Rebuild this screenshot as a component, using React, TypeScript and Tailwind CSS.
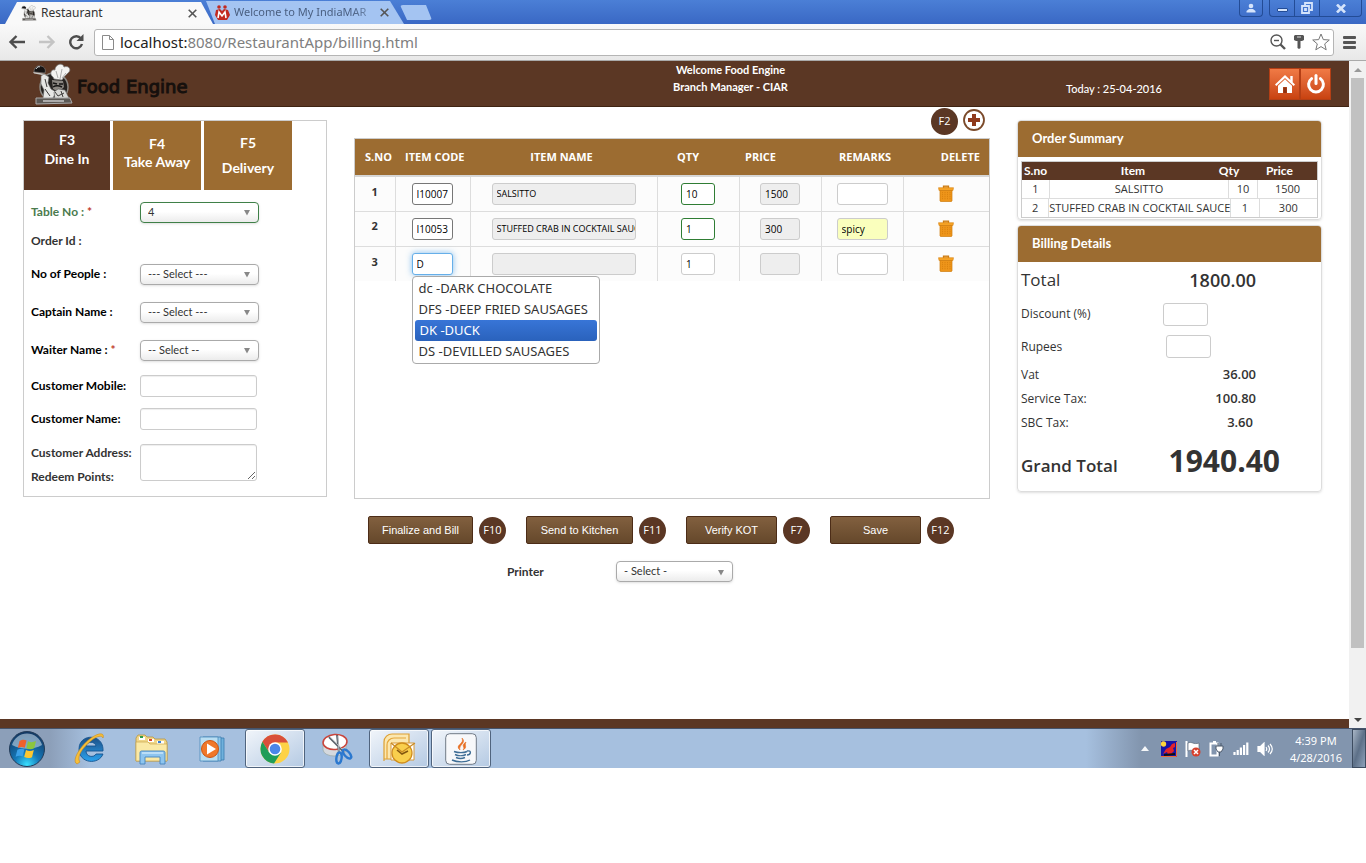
import React from 'react';

const orderRows = [
  { sno: 1, code: 'I10007', name: 'SALSITTO', qty: '10', price: '1500', remarks: '', saved: true },
  { sno: 2, code: 'I10053', name: 'STUFFED CRAB IN COCKTAIL SAUCE', qty: '1', price: '300', remarks: 'spicy', saved: true },
  { sno: 3, code: 'D', name: '', qty: '1', price: '', remarks: '', saved: false },
];

const suggestions = ['dc -DARK CHOCOLATE', 'DFS -DEEP FRIED SAUSAGES', 'DK -DUCK', 'DS -DEVILLED SAUSAGES'];

const ChefIcon = ({ className }: { className: string }) => (
  <svg viewBox="0 0 40 42" className={className} aria-hidden="true">
    <circle cx="21" cy="24" r="14" fill="#24211f" stroke="#8d8984" strokeWidth="1.500" />
    <path d="M20 14c-4-3-2-8 2-7 0-6 8-8 9-3 5-2 8 3 4 6l-4 4-2 3-8-1z" fill="#f3f3f1" stroke="#777" strokeWidth=".7" />
    <path d="M23 8l2 7M29 6l-2 10M33 10l-4 5" stroke="#999" strokeWidth=".8" fill="none" />
    <path d="M19 17l11 1 1 6-5 5-6-3z" fill="#8b8782" />
    <path d="M20 20l4 1m2 0l4 0M20 24c3-2 5-2 9 0" stroke="#161514" strokeWidth="1.500" fill="none" />
    <path d="M1 9c0-4 3-7 7-6 4 1 5 4 4 7z" fill="#151313" stroke="#888" strokeWidth=".6" />
    <path d="M3 6c1-2 3-3 4-2" stroke="#ddd" fill="none" />
    <path d="M0 9l13 2-1 1.500-11-2z" fill="#c9c9c7" />
    <path d="M8 13l3-2 5 3-1 6 3 6 5 3-3 6-10 1 1-9-3-6z" fill="#e7e7e5" stroke="#666" strokeWidth=".6" />
    <path d="M21 29l4-3 7 1 4 8-14 2z" fill="#d9d9d6" stroke="#555" strokeWidth=".6" />
    <path d="M12 16l2 8M12 26l5 7M22 29l3 4 6-3M28 28l2 6" stroke="#3d3b3a" fill="none" />
    <path d="M3 35h34l2 5-36 1z" fill="#5c5955" stroke="#aaa" strokeWidth="1" />
    <path d="M10 38h21" stroke="#c9c9c9" strokeWidth="1.500" />
  </svg>
);

const TrashIcon = () => (
  <svg viewBox="0 0 16 17" className="h-[17px] w-4" aria-hidden="true">
    <path d="M5.500 3V1.200h5V3" fill="#f7b455" stroke="#c97a12" strokeWidth="1.300" />
    <path d="M.5 2.700h15L15 5.500H1z" fill="#f6a325" stroke="#d98515" strokeWidth=".6" />
    <path d="M2 5.500h12V16l-.6.500H2.600L2 16z" fill="#ee951a" stroke="#cf7b0c" strokeWidth=".7" />
    <path d="M4.500 7v8M7 7v8M9.500 7v8M12 7v8" stroke="#d9820f" strokeWidth=".9" strokeDasharray="1.200 .8" />
  </svg>
);

const HomeIcon = () => (
  <svg viewBox="0 0 20 20" className="h-5 w-5" fill="#fff" aria-hidden="true">
    <path d="M10 1L0 10.500l1.300 1.500L10 4l8.700 8 1.300-1.500-2.300-2.200V2h-2.400v4z" />
    <path d="M10 5.300L3 11.800V19h5v-6h4v6h5v-7.200z" />
    <path d="M8.300 13.300h3.400V19H8.300z" fill="#8e3212" />
  </svg>
);

const PowerIcon = () => (
  <svg viewBox="0 0 20 20" className="h-5 w-5" fill="none" stroke="#fff" strokeWidth="3" strokeLinecap="round" aria-hidden="true">
    <path d="M5.600 4.600a7.400 7.400 0 1 0 8.800 0" />
    <path d="M10 1.500v8" />
  </svg>
);

const PlusIcon = () => (
  <svg viewBox="0 0 24 24" className="h-6 w-6" aria-hidden="true">
    <circle cx="12" cy="12" r="10" fill="#fff" stroke="#7b4a2a" strokeWidth="1.800" />
    <path d="M10 6h4v4h4v4h-4v4h-4v-4H6v-4h4z" fill="#8f3a1c" />
  </svg>
);

const WindowsOrb = () => (
  <svg viewBox="0 0 38 38" className="h-[38px] w-[38px]" aria-hidden="true">
    <defs>
      <radialGradient id="orb" cx=".5" cy=".95" r=".9">
        <stop offset="0" stopColor="#39e0ff" />
        <stop offset=".4" stopColor="#1578b8" />
        <stop offset="1" stopColor="#123a66" />
      </radialGradient>
    </defs>
    <circle cx="19" cy="19" r="17.500" fill="url(#orb)" stroke="#233b58" />
    <path d="M4 15a15.500 15.500 0 0 1 30 0c-9 5-20 5-30 0z" fill="#c6d8e8" opacity=".6" />
    <path d="M11.500 11c3-1.600 5-1.500 7-.4l-1.700 7.200c-2.300-1-4.300-1-7 .3z" fill="#f0602c" />
    <path d="M20 11.200c2.600 1.400 5 1.200 8-.2l-1.800 7.200c-2.800 1.400-5 1.300-7.800 0z" fill="#8cc63f" />
    <path d="M9.400 19.700c2.800-1.300 4.800-1.200 7-.2l-1.800 7c-2-1-4.200-1-7 .3z" fill="#3aa0e8" />
    <path d="M18 20c2.600 1.300 5 1.300 7.800 0L24 27.200c-2.600 1.300-5 1.200-7.800-.2z" fill="#fdc72f" />
  </svg>
);

const IeIcon = () => (
  <svg viewBox="0 0 34 34" className="h-[34px] w-[34px]" aria-hidden="true">
    <defs>
      <linearGradient id="ie" x1="0" y1="0" x2="0" y2="1">
        <stop offset="0" stopColor="#1d4f86" />
        <stop offset="1" stopColor="#2aa2ee" />
      </linearGradient>
    </defs>
    <path d="M31 19H14c0 6 8 7 10 3h7c-4 11-24 10-24-5C7 1 32 1 31 19zM14 14h10c-1-5-9-5-10 0z" fill="url(#ie)" stroke="#14548f" strokeWidth=".9" />
    <path d="M5 32c-6-3 3-18 14-26 7-5 14-6 12 0-1-3-6-2-11 2C11 15 4 25 8 30z" fill="#f7bf3a" stroke="#c98c1c" strokeWidth=".6" />
  </svg>
);

const FolderIcon = () => (
  <svg viewBox="0 0 34 32" className="h-8 w-[34px]" aria-hidden="true">
    <path d="M2 5l2-3h7l2 2h6l2 2h10l2 3v19H2z" fill="#f0d688" stroke="#b9963f" strokeWidth=".8" />
    <path d="M5 4h6v3H5zM14 6h6v3h-6zM23 8h7v3h-7z" fill="#fff" />
    <path d="M6 3h3v2H6z" fill="#2c9c4a" />
    <path d="M15 6h3v2h-3z" fill="#d9472c" />
    <path d="M24 8h3v2h-3z" fill="#3b7fd1" />
    <path d="M2 9h12l2 2h17v17H2z" fill="#fae9a6" stroke="#c9a64d" strokeWidth=".7" />
    <path d="M6 31V20c0-2 1-2 2-2h21c2 0 2 1 2 2v11h-5v-7H11v7z" fill="#8ec5ef" stroke="#4583bd" strokeWidth=".9" />
    <path d="M8 20h21" stroke="#d9effc" strokeWidth="1.200" />
  </svg>
);

const MediaIcon = () => (
  <svg viewBox="0 0 32 28" className="h-7 w-8" aria-hidden="true">
    <path d="M9 3h18v22H9z" fill="#6fb1dc" stroke="#3b7cae" strokeWidth=".8" />
    <path d="M6 2h18v24H6z" fill="#8fc6e8" stroke="#3b7cae" strokeWidth=".8" />
    <path d="M3 2h18v24H3z" fill="#b9def2" stroke="#4b8cbb" strokeWidth=".8" />
    <circle cx="13" cy="14" r="8.500" fill="#f0782a" stroke="#cd5512" />
    <path d="M10 8.500v11l9-5.500z" fill="#fff" />
  </svg>
);

const ChromeIcon = () => (
  <svg viewBox="0 0 30 30" className="h-[30px] w-[30px]" aria-hidden="true">
    <circle cx="15" cy="15" r="14.500" fill="#fdd246" />
    <path d="M2.400 7.800A14.500 14.500 0 0 1 28 8.500H15L9 18z" fill="#d94f3a" />
    <path d="M2.400 7.800A14.500 14.500 0 0 0 14 29.500L21 18.500 9 18z" fill="#1f9d58" />
    <circle cx="15" cy="15" r="6.800" fill="#fff" />
    <circle cx="15" cy="15" r="5.300" fill="#4a86e8" />
  </svg>
);

const SnipIcon = () => (
  <svg viewBox="0 0 34 34" className="h-[34px] w-[34px]" aria-hidden="true">
    <path d="M3 10v8c1 8 21 8 23 0v-8z" fill="#d5d9de" stroke="#9aa" strokeWidth=".8" />
    <ellipse cx="15" cy="10" rx="12" ry="7.500" fill="#fff" stroke="#c9443b" strokeWidth="1.500" transform="rotate(-5 15 10)" />
    <path d="M9 5l15 15M17 3l2 18" stroke="#5f666e" strokeWidth="2" />
    <path d="M10 5l14 14M18 4l1 16" stroke="#c5cad0" strokeWidth=".8" />
    <ellipse cx="19" cy="26" rx="2.600" ry="5.500" fill="none" stroke="#2b78cf" strokeWidth="2.400" transform="rotate(8 19 26)" />
    <ellipse cx="27" cy="22" rx="2.600" ry="5.500" fill="none" stroke="#2b78cf" strokeWidth="2.400" transform="rotate(-42 27 22)" />
  </svg>
);

const OutlookIcon = () => (
  <svg viewBox="0 0 34 32" className="h-8 w-[34px]" aria-hidden="true">
    <path d="M2 28V9c0-5 4-8 8-8h17v25H2z" fill="#fbe7b0" stroke="#dda032" strokeWidth="1.200" />
    <path d="M5 26V12c0-4 3-7 7-7h12" fill="none" stroke="#e4a63b" strokeWidth="1.200" />
    <path d="M9 10h23v17H9z" fill="#fff" stroke="#d79a3a" />
    <circle cx="20" cy="20" r="10" fill="#f9cf4d" stroke="#d08d1c" strokeWidth="1.300" />
    <path d="M9 10l11 9 13-9" fill="none" stroke="#c98a24" strokeWidth="1.300" />
    <path d="M15 17l5 4 6-3" fill="none" stroke="#84570f" strokeWidth="1.600" />
  </svg>
);

const JavaIcon = () => (
  <svg viewBox="0 0 32 32" className="h-8 w-8" aria-hidden="true">
    <rect x=".7" y=".7" width="30.600" height="30.600" rx="4" fill="#f7f8fa" stroke="#707a86" />
    <path d="M15 17c-6-5 5-6 2-12 5 5-4 7-2 12zM18 17c3-3-3-4 3-8-2 4 2 5-3 8z" fill="#e76f23" stroke="#e76f23" strokeWidth=".6" />
    <path d="M9 18.500c4 1.500 10 1.500 13 0M10 21.500c3 1.500 8 1.500 11 0M11 24.500c3 1.300 6 1.300 9 0M7 27c5 2.500 14 2.500 18 0M22 18c5-1 4 4 0 4" fill="none" stroke="#3f6e96" strokeWidth="1.400" />
  </svg>
);

const PageHeader: React.FC = () => (
  <header className="grid h-[46px] grid-cols-[1fr_auto_1fr] items-center border-b border-[#3f2413] bg-[#5b3724] text-white">
    <div className="flex items-center gap-1 pl-[33px]">
      <ChefIcon className="h-[42px] w-10" />
      <span className="pt-1 font-['DejaVu_Sans','Liberation_Sans',sans-serif] text-[18px] text-[#16100d] [-webkit-text-stroke:1px_#16100d]">Food Engine</span>
    </div>
    <div className="pb-3 pl-28 text-center text-[11px] font-bold leading-[17px]">
      <p>Welcome Food Engine</p>
      <p>Branch Manager - CIAR</p>
    </div>
    <div className="flex items-center justify-end pr-[18px]">
      <p className="mr-[107px] pt-[10px] text-[11px] font-medium">Today : 25-04-2016</p>
      <button aria-label="Home" className="grid h-8 w-[31px] place-items-center border border-[#b43f15] bg-linear-to-b from-[#f07a45] to-[#c8420f]">
        <HomeIcon />
      </button>
      <button aria-label="Log out" className="grid h-8 w-[31px] place-items-center border border-[#b43f15] bg-linear-to-b from-[#f07a45] to-[#c8420f]">
        <PowerIcon />
      </button>
    </div>
  </header>
);

const SelectBox = ({ id, value, valid = false, className }: { id: string; value: string; valid?: boolean; className: string }) => (
  <div className={`grid items-center ${className}`}>
    <select
      id={id}
      className={`col-start-1 row-start-1 h-[21px] w-full appearance-none rounded-[4px] border bg-linear-to-b from-white from-45% to-[#ececec] pl-[7px] text-[11px] font-normal text-[#333] shadow-sm ${valid ? 'border-[#3f8048]' : 'border-[#aaa]'}`}
    >
      <option>{value}</option>
    </select>
    <svg viewBox="0 0 8 7" className="pointer-events-none col-start-1 row-start-1 mr-2 mt-px h-[7px] w-2 justify-self-end" aria-hidden="true">
      <path d="M1 1h6L4 6.500z" fill="#888" />
    </svg>
  </div>
);

const tabClass = 'h-[69px] text-[14px] font-bold text-white';
const labelClass = 'w-[109px] shrink-0 text-[12px]';
const fieldClass = 'w-[117px] rounded-[3px] border border-[#ccc] bg-white px-1 text-[11px] shadow-[inset_0_1px_1px_rgba(0,0,0,0.07)]';

const TableForm: React.FC = () => (
  <section className="h-[377px] w-[304px] shrink-0 border border-[#ccc] font-['Lato','Open_Sans',sans-serif]">
    <div className="flex gap-[3px]">
      <button className={`${tabClass} w-[86px] bg-[#5b3724] pb-[14px] leading-[19px]`}>F3<br />Dine In</button>
      <button className={`${tabClass} w-[88px] bg-[#9c6c31] pb-[6px] leading-[18px]`}>F4<br />Take Away</button>
      <button className={`${tabClass} w-[88px] bg-[#9c6c31] pb-[2px] leading-[25px]`}>F5<br />Delivery</button>
    </div>
    <form className="pl-[7px] pt-[7px] font-bold text-black">
      <div className="flex h-[30px] items-center">
        <label htmlFor="table-no" className={`${labelClass} text-[#4b7b4e]`}>Table No : <span className="text-[#c0392b]">*</span></label>
        <SelectBox id="table-no" value="4" valid className="w-[119px]" />
      </div>
      <div className="flex h-7 items-center text-[#333]">
        <span className={labelClass}>Order Id :</span>
      </div>
      <div className="flex h-[38px] items-center">
        <label htmlFor="people" className={labelClass}>No of People :</label>
        <SelectBox id="people" value="--- Select ---" className="w-[119px]" />
      </div>
      <div className="flex h-[38px] items-center">
        <label htmlFor="captain" className={labelClass}>Captain Name :</label>
        <SelectBox id="captain" value="--- Select ---" className="w-[119px]" />
      </div>
      <div className="flex h-[38px] items-center">
        <label htmlFor="waiter" className={labelClass}>Waiter Name : <span className="text-[#c0392b]">*</span></label>
        <SelectBox id="waiter" value="-- Select --" className="w-[119px]" />
      </div>
      <div className="flex h-[33px] items-center">
        <label htmlFor="mobile" className={labelClass}>Customer Mobile:</label>
        <input id="mobile" type="text" className={`${fieldClass} h-[22px]`} />
      </div>
      <div className="flex h-[33px] items-center">
        <label htmlFor="customer" className={labelClass}>Customer Name:</label>
        <input id="customer" type="text" className={`${fieldClass} h-[22px]`} />
      </div>
      <div className="flex pt-[9px] text-[#333]">
        <div className={`${labelClass} leading-6`}>
          <label htmlFor="address" className="-mt-[3px] block">Customer Address:</label>
          <span>Redeem Points:</span>
        </div>
        <textarea id="address" className={`${fieldClass} h-[37px]`} />
      </div>
    </form>
  </section>
);

const cellInput = 'h-[22px] rounded-[3px] border text-black';
const keyBadge = 'grid h-[27px] w-[27px] shrink-0 place-items-center rounded-full bg-[#5b3724] text-[11px] text-white';

const ItemTable: React.FC = () => (
  <div className="h-[361px] border border-[#ccc]">
    <table className="w-full table-fixed border-collapse text-[#333]">
      <colgroup>
        <col className="w-10" />
        <col className="w-[75px]" />
        <col />
        <col className="w-[82px]" />
        <col className="w-[82px]" />
        <col className="w-[82px]" />
        <col className="w-[86px]" />
      </colgroup>
      <thead>
        <tr className="h-[37px] border-b-2 border-[#d6d6d6] bg-[#9c6c31] text-left text-[11px] text-white">
          <th className="pl-[10px]">S.NO</th>
          <th className="whitespace-nowrap pl-[10px]">ITEM CODE</th>
          <th className="pr-1 text-center">ITEM NAME</th>
          <th className="pl-5">QTY</th>
          <th className="pl-[6px]">PRICE</th>
          <th className="pl-[18px]">REMARKS</th>
          <th className="pr-[9px] text-right">DELETE</th>
        </tr>
      </thead>
      <tbody>
        {orderRows.map((row) => (
          <tr key={row.sno} className="h-[35px] divide-x divide-[#ddd] border-b border-[#ddd] bg-[#fcfcfc] last:border-b-0">
            <td className="pb-1 text-center text-[11px] font-bold">{row.sno}</td>
            <td className="relative pl-4">
              <input
                aria-label={`Item code ${row.sno}`}
                defaultValue={row.code}
                className={`${cellInput} block w-[41px] bg-white px-1 text-[10px] ${row.saved ? 'border-[#777]' : 'border-[#66afe9] shadow-[0_0_6px_rgba(102,175,233,0.8)]'}`}
              />
              {!row.saved && (
                <ul className="absolute left-4 top-[29px] z-10 w-[188px] rounded-[4px] border border-[#aaa] bg-white px-[2px] py-px font-['Noto_Sans',sans-serif] text-[13px] leading-[21px] text-[#333]">
                  {suggestions.map((item) => (
                    <li
                      key={item}
                      className={
                        item === 'DK -DUCK'
                          ? 'whitespace-nowrap rounded-[3px] bg-linear-to-b from-[#3875d7] to-[#2a62bc] pl-[5px] text-white'
                          : 'whitespace-nowrap pl-1'
                      }
                    >
                      {item}
                    </li>
                  ))}
                </ul>
              )}
            </td>
            <td>
              <input
                aria-label={`Item name ${row.sno}`}
                readOnly
                value={row.name}
                className={`${cellInput} mx-auto block w-36 border-[#ccc] bg-[#eee] pl-1 text-[9px]`}
              />
            </td>
            <td className="pt-px">
              <input
                aria-label={`Quantity ${row.sno}`}
                defaultValue={row.qty}
                className={`${cellInput} mx-auto block w-[34px] bg-white px-1 text-[10px] ${row.saved ? 'border-[#2f7d34]' : 'border-[#ccc]'}`}
              />
            </td>
            <td>
              <input
                aria-label={`Price ${row.sno}`}
                readOnly
                value={row.price}
                className={`${cellInput} mx-auto block w-10 border-[#ccc] bg-[#eee] px-1 text-[10px]`}
              />
            </td>
            <td>
              <input
                aria-label={`Remarks ${row.sno}`}
                defaultValue={row.remarks}
                className={`${cellInput} mx-auto block w-[51px] border-[#ccc] px-1 text-[10px] ${row.remarks ? 'bg-[#faffbd]' : 'bg-white'}`}
              />
            </td>
            <td>
              <button aria-label={`Delete row ${row.sno}`} className="mx-auto block">
                <TrashIcon />
              </button>
            </td>
          </tr>
        ))}
      </tbody>
    </table>
  </div>
);

const ActionButton = ({ label, hotkey, className }: { label: string; hotkey: string; className: string }) => (
  <div className="flex items-center gap-[6px]">
    <button
      className={`h-7 whitespace-nowrap rounded-[2px] border border-[#4c2c17] bg-linear-to-b from-[#82603f] to-[#65482b] font-['Liberation_Sans',Arial,sans-serif] text-[11px] text-white ${className}`}
    >
      {label}
    </button>
    <span className={keyBadge}>{hotkey}</span>
  </div>
);

const cardTitle = "flex items-center bg-[#9c6c31] pl-[14px] font-['Lato','Open_Sans',sans-serif] text-[13px] font-bold text-white";

const OrderSummary: React.FC = () => (
  <section className="h-[100px] overflow-hidden rounded-[4px] border border-[#ddd] shadow-sm">
    <h2 className={`${cardTitle} h-9`}>Order Summary</h2>
    <table className="mx-[3px] mt-1 block border border-[#ccc] text-[11px] text-[#333]">
      <thead className="block bg-[#5b3724] font-['Lato','Open_Sans',sans-serif] text-[12px] text-white">
        <tr className="flex leading-[18px]">
          <th className="w-7 pl-[2px] text-left">S.no</th>
          <th className="flex-1">Item</th>
          <th className="w-[26px]">Qty</th>
          <th className="w-[75px]">Price</th>
        </tr>
      </thead>
      <tbody className="block divide-y divide-[#ddd] text-center">
        {orderRows.filter((row) => row.saved).map((row) => (
          <tr key={row.sno} className="flex divide-x divide-[#ddd] leading-[18px]">
            <td className="w-7">{row.sno}</td>
            <td className="flex-1 whitespace-nowrap">{row.name}</td>
            <td className="w-[29px]">{row.qty}</td>
            <td className="w-[59px]">{row.price}</td>
          </tr>
        ))}
      </tbody>
    </table>
  </section>
);

const BillingDetails: React.FC = () => (
  <section className="mt-[5px] h-[267px] overflow-hidden rounded-[4px] border border-[#ddd] text-[12px] text-[#333] shadow-sm">
    <h2 className={`${cardTitle} h-9`}>Billing Details</h2>
    <div className="pl-[3px]">
      <div className="flex h-9 items-center justify-between pr-[65px]">
        <span className="text-[17px]">Total</span>
        <span className="text-[18px] font-semibold">1800.00</span>
      </div>
      <div className="flex h-8 items-center justify-between pr-[113px]">
        <label htmlFor="discount">Discount (%)</label>
        <input id="discount" type="text" className="h-[23px] w-[45px] rounded-[3px] border border-[#ccc] px-1" />
      </div>
      <div className="flex h-[33px] items-center justify-between pr-[110px]">
        <label htmlFor="rupees">Rupees</label>
        <input id="rupees" type="text" className="h-[23px] w-[45px] rounded-[3px] border border-[#ccc] px-1" />
      </div>
      <div className="flex h-6 items-center justify-between pr-[65px]">
        <span>Vat</span>
        <span className="text-[13px] font-semibold">36.00</span>
      </div>
      <div className="flex h-6 items-center justify-between pr-[65px]">
        <span>Service Tax:</span>
        <span className="text-[13px] font-semibold">100.80</span>
      </div>
      <div className="flex h-6 items-center justify-between pr-[68px]">
        <span>SBC Tax:</span>
        <span className="text-[13px] font-semibold">3.60</span>
      </div>
      <div className="flex h-[54px] items-baseline justify-between pr-[41px]">
        <span className="text-[17px] font-semibold">Grand Total</span>
        <span className="text-[30px] font-bold leading-[52px]">1940.40</span>
      </div>
    </div>
  </section>
);

const BrowserBar: React.FC = () => (
  <div className="font-['Noto_Sans',sans-serif]">
    <div className="flex h-6 items-end bg-linear-to-b from-[#4b7fd6] to-[#3a68c4] pl-[5px]">
      <div className="flex h-[22px] w-[208px] items-center bg-[#f9f9f9] pl-4 pr-4 [clip-path:polygon(0_100%,12px_0,196px_0,100%_100%)]">
        <ChefIcon className="h-4 w-4" />
        <span className="ml-1 flex-1 text-[12px] text-[#333]">Restaurant</span>
        <button aria-label="Close Restaurant" className="text-[#555]">
          <svg viewBox="0 0 9 9" className="h-[9px] w-[9px]" stroke="currentColor" strokeWidth="1.600" aria-hidden="true"><path d="M.7.7l7.600 7.600M8.300.7L.7 8.300" /></svg>
        </button>
      </div>
      <div className="-ml-[7px] flex h-[23px] w-[198px] items-center bg-[#a4c4f2] pl-2 pr-[15px] [clip-path:polygon(0_0,184px_0,100%_100%,9px_100%)]">
        <svg viewBox="0 0 16 16" className="h-4 w-4 shrink-0" aria-hidden="true">
          <path d="M2 5l4-1 2 2 2-2 4 1 2 5-3 5H4L1 10z" fill="#c22a20" />
          <circle cx="5" cy="2" r="1.800" fill="#c22a20" />
          <circle cx="11" cy="2" r="1.800" fill="#c22a20" />
          <path d="M4 13l1-6 3 4 3-4 1 6" stroke="#fff" strokeWidth="1.600" fill="none" />
        </svg>
        <span className="ml-1 flex-1 whitespace-nowrap text-[11px] text-[#4a5f80] [mask-image:linear-gradient(to_right,black_80%,rgba(0,0,0,0.3))]">Welcome to My IndiaMAR</span>
        <button aria-label="Close Welcome to My IndiaMART" className="text-[#555]">
          <svg viewBox="0 0 9 9" className="h-[9px] w-[9px]" stroke="currentColor" strokeWidth="1.600" aria-hidden="true"><path d="M.7.7l7.600 7.600M8.300.7L.7 8.300" /></svg>
        </button>
      </div>
      <button aria-label="New tab" className="-ml-1 mb-1 h-[15px] w-8 rounded-[3px] bg-[#a4c4f2] [clip-path:polygon(0_0,26px_0,100%_100%,7px_100%)]" />
      <div className="ml-auto mr-1 flex gap-[6px] self-start text-[#d5e4fb]">
        <button aria-label="User" className="grid h-[17px] w-6 place-items-center rounded-b-[4px] border border-t-0 border-[#234c96]">
          <svg viewBox="0 0 10 10" className="h-[10px] w-[10px]" fill="currentColor" aria-hidden="true"><circle cx="5" cy="3" r="2.300" /><path d="M.5 9.500V8L3 6h4l2.500 2v1.500z" /></svg>
        </button>
        <div className="flex divide-x divide-[#234c96] rounded-b-[4px] border border-t-0 border-[#234c96]">
          <button aria-label="Minimize" className="grid h-4 w-[25px] place-items-center pt-1">
            <span className="h-1 w-[11px] rounded-[1px] border border-[#234c96] bg-current" />
          </button>
          <button aria-label="Restore" className="grid h-4 w-[25px] place-items-center">
            <svg viewBox="0 0 12 12" className="h-3 w-3" fill="none" stroke="currentColor" strokeWidth="1.800" aria-hidden="true"><path d="M4 3V1h7v7H9M1 4h7v7H1zM4 7h1v1H4z" /></svg>
          </button>
          <button aria-label="Close" className="grid h-4 w-[41px] place-items-center">
            <svg viewBox="0 0 10 9" className="h-[9px] w-[10px]" stroke="currentColor" strokeWidth="2.600" aria-hidden="true"><path d="M1 .5l8 8M9 .5l-8 8" /></svg>
          </button>
        </div>
      </div>
    </div>
    <div className="flex h-[37px] items-center border-b border-[#aaa] bg-linear-to-b from-[#f9f9f9] to-[#e8e8e8] pr-[10px]">
      <button aria-label="Back" className="ml-2 text-[#4d4d4d]">
        <svg viewBox="0 0 18 14" className="h-[14px] w-[18px]" fill="none" stroke="currentColor" strokeWidth="2.400" aria-hidden="true"><path d="M17 7H3M8.500 1L2.500 7l6 6" /></svg>
      </button>
      <button aria-label="Forward" className="ml-3 text-[#c4c4c4]">
        <svg viewBox="0 0 18 14" className="h-[14px] w-[18px]" fill="none" stroke="currentColor" strokeWidth="2.400" aria-hidden="true"><path d="M1 7h14M9.500 1l6 6-6 6" /></svg>
      </button>
      <button aria-label="Reload" className="ml-3 text-[#4d4d4d]">
        <svg viewBox="0 0 16 16" className="h-4 w-4" fill="none" aria-hidden="true"><path d="M13 4.500A6 6 0 1 0 14 10" stroke="currentColor" strokeWidth="2.400" /><path d="M15.500 0v7h-7z" fill="currentColor" /></svg>
      </button>
      <div className="ml-[10px] flex h-[27px] flex-1 items-center rounded-[3px] border border-[#b5b5b5] bg-white pl-[7px] pr-[3px]">
        <svg viewBox="0 0 12 15" className="h-[15px] w-3" fill="#fff" stroke="#8a8a8a" aria-hidden="true"><path d="M.5.5h7l4 4v10H.5zM7.500.5v4h4" /></svg>
        <p className="ml-[6px] flex-1 text-[15px] text-[#808080]"><span className="text-[#222]">localhost:</span>8080/RestaurantApp/billing.html</p>
        <svg viewBox="0 0 16 16" className="h-4 w-4" fill="none" stroke="#555" strokeWidth="1.400" aria-hidden="true"><circle cx="6.500" cy="6.500" r="5.500" /><path d="M4 6.500h5" /><path d="M10.500 10.500l4.500 4.500" strokeWidth="2.400" /></svg>
        <svg viewBox="0 0 10 14" className="ml-2 h-[14px] w-[10px]" fill="#555" aria-hidden="true"><path d="M1 0h8l1 1v4L8 6H6.500v7L5 14l-1.500-1V6H2L0 5V1z" /><path d="M3 2h4" stroke="#ddd" /></svg>
        <svg viewBox="0 0 18 18" className="ml-2 h-[18px] w-[18px]" fill="#fff" stroke="#777" aria-hidden="true"><path d="M9 1l2.300 5.600 6 .4-4.600 3.900 1.500 5.900L9 13.600l-5.200 3.200 1.500-5.900L.7 7l6-.4z" /></svg>
      </div>
      <button aria-label="Menu" className="ml-[9px] flex w-[13px] flex-col gap-[2px]">
        <span className="h-[3px] w-full rounded-[1px] bg-[#555]" />
        <span className="h-[3px] w-full rounded-[1px] bg-[#555]" />
        <span className="h-[3px] w-full rounded-[1px] bg-[#555]" />
      </button>
    </div>
  </div>
);

const taskSlot = 'grid h-full w-[62px] place-items-center';
const taskOpen = 'grid h-[39px] w-[60px] place-items-center rounded-[3px] border border-[#50647e] bg-linear-to-br from-[#f1f5fa] to-[#b5cae3] shadow-[inset_0_0_0_1px_rgba(255,255,255,0.7)]';

const Taskbar: React.FC = () => (
  <footer className="flex h-10 items-center border-t border-[#45536b] bg-[linear-gradient(to_right,#8c9fb9_0,#8c9fb9_50px,#a6c0df_90px,#a6c0df_calc(100%-280px),#8295ae_calc(100%-225px),#8295ae_100%)]">
    <button aria-label="Start" className="ml-2 mr-3"><WindowsOrb /></button>
    <button aria-label="Internet Explorer" className={taskSlot}><IeIcon /></button>
    <button aria-label="Windows Explorer" className={taskSlot}><FolderIcon /></button>
    <button aria-label="Media Player" className={taskSlot}><MediaIcon /></button>
    <div className={taskSlot}><button aria-label="Chrome" className={taskOpen}><ChromeIcon /></button></div>
    <button aria-label="Snipping Tool" className={taskSlot}><SnipIcon /></button>
    <div className={taskSlot}><button aria-label="Outlook" className={taskOpen}><OutlookIcon /></button></div>
    <div className={taskSlot}><button aria-label="Java" className={taskOpen}><JavaIcon /></button></div>
    <div className="ml-auto flex h-full items-center">
      <svg viewBox="0 0 8 5" className="h-[5px] w-2" aria-hidden="true"><path d="M4 0l4 5H0z" fill="#f4f6f8" /></svg>
      <svg viewBox="0 0 16 16" className="ml-3 h-4 w-4" aria-hidden="true">
        <path d="M0 0h16v16H0z" fill="#1715a8" />
        <circle cx="2.500" cy="3" r="2.700" fill="#ffd53c" />
        <path d="M14 2l-3 1-2 3-4 2-3 5 4-2 1 3h6l-2-2 2-2-1-3 2-1z" fill="#e3232b" />
        <path d="M3 14l11-1" stroke="#111" strokeWidth="2" />
        <path d="M0 15.500h15.500V1" stroke="#ef6a3a" fill="none" />
      </svg>
      <svg viewBox="0 0 16 16" className="ml-2 h-4 w-4" aria-hidden="true">
        <path d="M1.500 0v16" stroke="#fff" strokeWidth="2" />
        <path d="M3 2c4-2 5 2 11 0v8c-5 1-7-2-11 0z" fill="#fff" stroke="#5b6878" strokeWidth=".7" />
        <circle cx="11" cy="11" r="4.500" fill="#d6402c" />
        <path d="M9 9l4 4M13 9l-4 4" stroke="#fff" strokeWidth="1.500" />
      </svg>
      <svg viewBox="0 0 15 16" className="ml-2 h-4 w-[15px]" aria-hidden="true">
        <path d="M1.500 2.500h7v12h-7zM4 .5h3" fill="none" stroke="#fff" strokeWidth="2" />
        <path d="M7 5h7v3l-2 3h-3L7 8zM9 2v3M12 2v3M10.500 11v4" fill="#fff" stroke="#4d5a6c" strokeWidth="1" />
      </svg>
      <svg viewBox="0 0 16 13" className="ml-[9px] h-[13px] w-4" stroke="#fff" strokeWidth="2.200" aria-hidden="true">
        <path d="M1.500 10v3M4.700 8v5M7.900 5.500V13M11.100 3v10M14.300.5V13" />
      </svg>
      <svg viewBox="0 0 16 14" className="ml-2 h-[14px] w-4" fill="none" stroke="#fff" strokeWidth="1.200" aria-hidden="true">
        <path d="M1 4.500h2.500L7 1v12L3.500 9.500H1z" fill="#fff" />
        <path d="M9 5c1 1.300 1 2.700 0 4M11 3.500c2 2.300 2 4.700 0 7M13 2c3 3.300 3 6.700 0 10" />
      </svg>
      <div className="ml-3 mr-[5px] w-[62px] text-center font-['Noto_Sans',sans-serif] text-[11px] leading-[17px] text-white">
        <p>4:39 PM</p>
        <p>4/28/2016</p>
      </div>
      <button aria-label="Show desktop" className="h-full w-[14px] border border-[#3d4c60] bg-linear-to-br from-[#a9b6c6] via-[#5d7088] to-[#8fa2ba]" />
    </div>
  </footer>
);

const App: React.FC = () => {
  return (
    <div className="w-full bg-white font-['Open_Sans','Noto_Sans',sans-serif]">
      <BrowserBar />
      <div className="flex">
        <div className="flex min-w-0 flex-1 flex-col">
          <div className="font-['Lato','Open_Sans',sans-serif]">
            <PageHeader />
          </div>
          <main className="flex flex-1 gap-[27px] pl-[23px] pr-[27px]">
            <div className="pt-[13px]">
              <TableForm />
            </div>
            <div className="min-w-0 flex-1">
              <div className="flex h-[31px] items-start justify-end gap-1 pr-1 pt-px">
                <span className={keyBadge}>F2</span>
                <button aria-label="Add item"><PlusIcon /></button>
              </div>
              <ItemTable />
              <div className="flex gap-5 pl-[14px] pt-[17px]">
                <ActionButton label="Finalize and Bill" hotkey="F10" className="w-[105px]" />
                <ActionButton label="Send to Kitchen" hotkey="F11" className="w-[107px]" />
                <ActionButton label="Verify KOT" hotkey="F7" className="w-[91px]" />
                <ActionButton label="Save" hotkey="F12" className="w-[91px]" />
              </div>
              <div className="flex items-center pl-[153px] pt-[17px] font-['Lato','Open_Sans',sans-serif]">
                <label htmlFor="printer" className={`${labelClass} font-bold text-[#333]`}>Printer</label>
                <SelectBox id="printer" value="- Select -" className="w-[117px]" />
              </div>
            </div>
            <div className="w-[305px] shrink-0 pt-[13px]">
              <OrderSummary />
              <BillingDetails />
            </div>
          </main>
          <div className="h-[9px] bg-[#5b3724]" />
        </div>
        <div className="flex h-[667px] w-[17px] shrink-0 flex-col items-center bg-[#f1f1f1]">
          <button aria-label="Scroll up" className="grid h-[17px] w-full place-items-center">
            <svg viewBox="0 0 8 4" className="h-1 w-2" aria-hidden="true"><path d="M4 0l4 4H0z" fill="#999" /></svg>
          </button>
          <div className="w-[13px] flex-1 bg-[#c1c1c1]" />
          <button aria-label="Scroll down" className="flex h-20 w-full items-end justify-center pb-[6px]">
            <svg viewBox="0 0 8 4" className="h-1 w-2" aria-hidden="true"><path d="M0 0h8L4 4z" fill="#444" /></svg>
          </button>
        </div>
      </div>
      <Taskbar />
    </div>
  );
};

export default App;
